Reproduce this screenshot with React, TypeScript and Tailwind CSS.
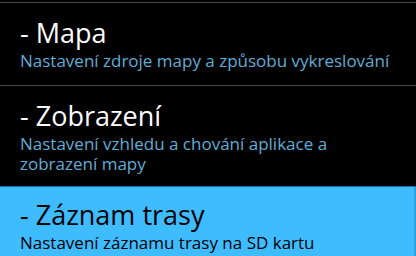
import React from "react";

type Pref = { title: string; summary: string; selected?: boolean };

const prefs: Pref[] = [
  { title: "- Mapa", summary: "Nastavení zdroje mapy a způsobu vykreslování" },
  { title: "- Zobrazení", summary: "Nastavení vzhledu a chování aplikace a zobrazení mapy" },
  { title: "- Záznam trasy", summary: "Nastavení záznamu trasy na SD kartu", selected: true },
];

function PrefRow({ title, summary, selected }: Pref) {
  return (
    <div
      className={
        selected
          ? "bg-[#3fbcff] border-r-2 border-[#2c9fe0] pl-[20px] pr-[16px] pt-[12px] pb-[15px]"
          : "pl-[20px] pr-[18px] pt-[14px] pb-[14px]"
      }
    >
      <div className={`text-[27px] leading-[32px] ${selected ? "text-black" : "text-white"}`}>{title}</div>
      <div className={`mt-[2px] text-[17px] leading-[20px] ${selected ? "text-black" : "text-[#62acd6]"}`}>
        {summary}
      </div>
    </div>
  );
}

export default function App() {
  return (
    <div className="w-[416px] h-[256px] overflow-hidden bg-black pt-[2px] font-['Open_Sans',sans-serif]">
      {prefs.map((p) => (
        <div
          key={p.title}
          className={p.selected ? "relative -mt-[2px] border-t border-[#1f6f9c]" : "border-t border-[#4a4a4a]"}
        >
          <PrefRow {...p} />
        </div>
      ))}
    </div>
  );
}
